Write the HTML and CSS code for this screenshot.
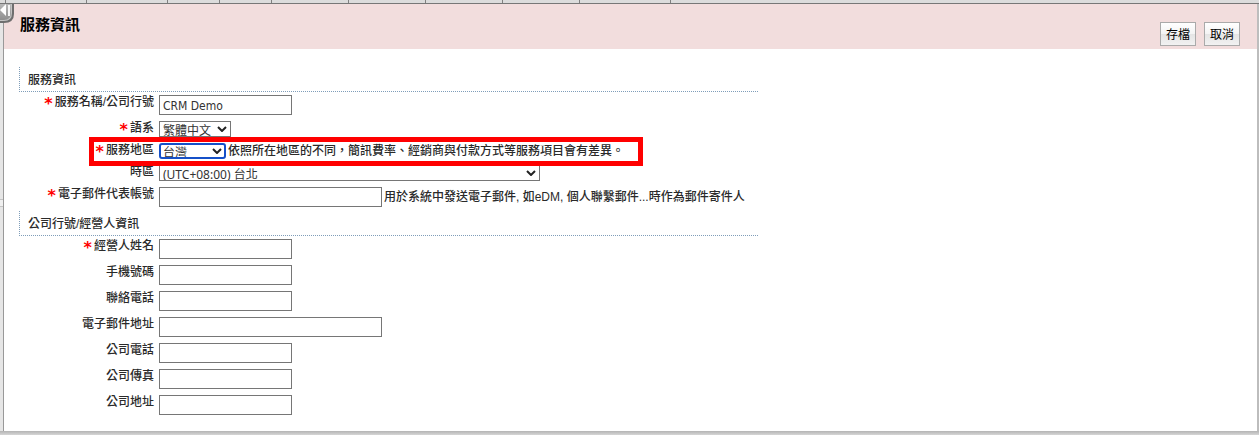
FILE: index.html
```
<!DOCTYPE html>
<html lang="zh-Hant">
    <head>
        <meta charset="utf-8">
        <title>服務資訊</title>
        <link rel="stylesheet" href="styles.css">
    </head>
    <body>
        <div class="top-bar">
            <span class="tab tab-first"></span>
            <span class="tab tab-wide"></span>
            <span class="tab tab-wide"></span>
            <span class="tab tab-small"></span>
            <span class="tab tab-small"></span>
            <span class="tab"></span>
            <span class="tab"></span>
            <span class="tab"></span>
            <span class="tab"></span>
            <span class="tab tab-last"></span>
        </div>
        <div class="main">
            <div class="splitter"><span class="grip"></span></div>
            <button type="button" class="collapse" aria-label="收合">
                <svg width="15" height="20" viewBox="0 0 15 20">
                    <defs>
                        <linearGradient id="metal" x1="0" y1="0" x2="0" y2="1">
                            <stop offset="0" stop-color="#b8b8b8"/>
                            <stop offset="1" stop-color="#8e8e8e"/>
                        </linearGradient>
                    </defs>
                    <path d="M0 0H14V10Q14 19 4 19H0Z" fill="#6e6e6e"/>
                    <path d="M0 0H12V9Q12 17 4 17H0Z" fill="#c4c4c4"/>
                    <path d="M0 0H11V9Q11 16 4 16H0Z" fill="url(#metal)"/>
                    <path d="M0 6L6 0V12Z" fill="#fff"/>
                    <path d="M8 1H10V12H8Z" fill="#f4f4f4"/>
                </svg>
            </button>
            <form class="panel">
                <div class="header">
                    <h1>服務資訊</h1>
                    <div class="actions">
                        <button type="button" class="btn">存檔</button>
                        <button type="button" class="btn">取消</button>
                    </div>
                </div>
                <div class="content">
                    <h2>服務資訊</h2>
                    <div class="row">
                        <label for="name"><span class="req">*</span>服務名稱/公司行號</label>
                        <input type="text" id="name" value="CRM Demo">
                    </div>
                    <div class="row">
                        <label for="lang"><span class="req">*</span>語系</label>
                        <div class="select lang"><select id="lang"><option>繁體中文</option></select><svg width="10" height="6" viewBox="0 0 10 6"><path d="M1 1L5 5L9 1"/></svg></div>
                    </div>
                    <div class="row marked">
                        <label for="region"><span class="req">*</span>服務地區</label>
                        <div class="select region"><select id="region"><option>台灣</option></select><svg width="10" height="6" viewBox="0 0 10 6"><path d="M1 1L5 5L9 1"/></svg></div>
                        <span class="hint">依照所在地區的不同，簡訊費率、經銷商與付款方式等服務項目會有差異。</span>
                    </div>
                    <div class="row">
                        <label for="zone">時區</label>
                        <div class="select zone"><select id="zone"><option>(UTC+08:00) 台北</option></select><svg width="10" height="6" viewBox="0 0 10 6"><path d="M1 1L5 5L9 1"/></svg></div>
                    </div>
                    <div class="row">
                        <label for="sender"><span class="req">*</span>電子郵件代表帳號</label>
                        <input type="text" id="sender" class="long">
                        <span class="hint">用於系統中發送電子郵件, 如eDM, 個人聯繫郵件...時作為郵件寄件人</span>
                    </div>
                    <h2>公司行號/經營人資訊</h2>
                    <div class="row">
                        <label for="owner"><span class="req">*</span>經營人姓名</label>
                        <input type="text" id="owner">
                    </div>
                    <div class="row">
                        <label for="mobile">手機號碼</label>
                        <input type="text" id="mobile">
                    </div>
                    <div class="row">
                        <label for="phone">聯絡電話</label>
                        <input type="text" id="phone">
                    </div>
                    <div class="row">
                        <label for="email">電子郵件地址</label>
                        <input type="text" id="email" class="long">
                    </div>
                    <div class="row">
                        <label for="office">公司電話</label>
                        <input type="text" id="office">
                    </div>
                    <div class="row">
                        <label for="fax">公司傳真</label>
                        <input type="text" id="fax">
                    </div>
                    <div class="row">
                        <label for="address">公司地址</label>
                        <input type="text" id="address">
                    </div>
                </div>
            </form>
        </div>
        <div class="bottom-bar"></div>
    </body>
</html>
```
FILE: styles.css
```
*, *::after {
    box-sizing: border-box;
}
body {
    margin: 0;
    min-height: 100vh;
    display: flex;
    flex-direction: column;
    background-color: #fff;
    color: #2a2a2a;
    font-family: "Liberation Sans", "Noto Sans CJK TC", sans-serif;
    font-size: 12px;
}
.top-bar {
    display: flex;
    height: 4px;
    background-color: #dcdcdc;
    border-bottom: 1px solid #777;
}
.tab {
    width: 77px;
    border-right: 1px solid #808080;
}
.tab-first {
    width: 6px;
}
.tab-wide {
    width: 81px;
}
.tab-small {
    width: 52px;
}
.tab-last {
    width: 91px;
}
.main {
    position: relative;
    display: flex;
    flex: 1;
}
.splitter {
    display: flex;
    align-items: center;
    width: 4px;
    background-color: #e6e6e6;
    border-right: 1px solid #999;
}
.grip {
    width: 3px;
    height: 8px;
    margin-bottom: 30px;
    border: solid #c4c4c4;
    border-width: 1px 0;
    background-color: #f0f0f0;
}
.collapse {
    position: absolute;
    top: 0;
    left: 0;
    padding: 0;
    border: 0;
    background: none;
}
.collapse svg {
    display: block;
}
.panel {
    flex: 1;
    border-right: 2px solid #bdbdbd;
}
.header {
    display: flex;
    justify-content: space-between;
    height: 45px;
    padding: 0 17px 0 16px;
    background-color: #f2dddd;
}
h1 {
    margin: 10px 0 0;
    color: #000;
    font-size: 15px;
    line-height: 22px;
}
.actions {
    display: flex;
    gap: 8px;
    padding-top: 18px;
}
.btn {
    width: 36px;
    height: 24px;
    padding: 0 0 2px;
    border: 1px solid #aaa;
    background: linear-gradient(#fff 0%, #f4f4f4 48%, #e4e4e4 50%, #f2f2f2 100%);
    color: #000;
    font-family: inherit;
    font-size: 12px;
}
.content {
    padding: 18px 15px 12px;
}
h2 {
    width: 739px;
    max-width: 100%;
    height: 25px;
    margin: 0;
    padding-left: 8px;
    border-left: 1px dotted #7f9db9;
    border-bottom: 1px dotted #7f9db9;
    font-size: 12px;
    font-weight: 500;
    line-height: 27px;
}
.row + h2 {
    margin-top: 1px;
}
.row {
    position: relative;
    display: flex;
    align-items: center;
    padding: 3px 0;
}
label {
    align-self: flex-start;
    width: 135px;
    height: 16px;
    margin: -1px 5px 0 0;
    font-weight: 500;
    line-height: 16px;
    text-align: right;
}
.req {
    margin-right: 2px;
    color: #f00;
    font-family: "DejaVu Sans", sans-serif;
    font-size: 16px;
    font-weight: bold;
    vertical-align: -3px;
    line-height: 10px;
}
input {
    width: 133px;
    height: 20px;
    padding: 2px 3px 0;
    border: 1px solid #767676;
    color: #333;
    font-family: "DejaVu Sans Condensed", "Noto Sans CJK TC", sans-serif;
    font-size: 12px;
}
.long {
    width: 223px;
}
.select {
    position: relative;
    width: 72px;
    height: 16px;
}
.select select {
    display: block;
    width: 100%;
    height: 16px;
    padding: 2px 3px 0;
    appearance: none;
    border: 1px solid #767676;
    border-radius: 0;
    background-color: #fff;
    color: #333;
    font-family: "Noto Sans", "Noto Sans CJK TC", sans-serif;
    font-size: 12px;
    line-height: 14px;
}
.select svg {
    position: absolute;
    top: 5px;
    right: 4px;
    fill: none;
    stroke: #222;
    stroke-width: 2;
    pointer-events: none;
}
.select.region {
    width: 67px;
}
.region select {
    padding: 1px 2px 0;
    border: 2px solid #1550c8;
    border-radius: 3px;
}
.select.zone {
    width: 381px;
}
.hint {
    margin-left: 2px;
    font-weight: 500;
    line-height: 16px;
}
/* red frame around the region row */
.marked::after {
    content: "";
    position: absolute;
    z-index: 1;
    top: -3px;
    left: 70px;
    width: 554px;
    height: 29px;
    border: 5px solid #f00;
    pointer-events: none;
}
.bottom-bar {
    height: 4px;
    background: linear-gradient(#b4b4b4, #d6d6d6);
}
```
